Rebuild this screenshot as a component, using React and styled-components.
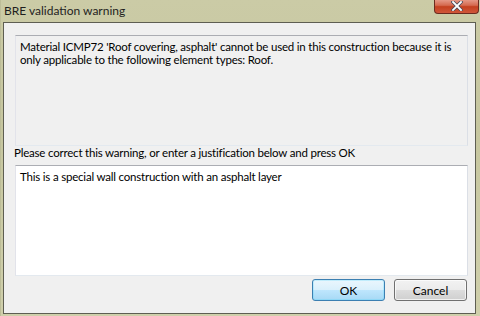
import styled, { createGlobalStyle } from 'styled-components';

const GlobalStyle = createGlobalStyle`
  body {
    margin: 0;
    font-family: Lato, 'Noto Sans', sans-serif;
  }
`;

const Window = styled.div`
  width: 480px;
  height: 316px;
  box-sizing: border-box;
  display: flex;
  flex-direction: column;
  padding: 0 4px 2px 2px;
  background: linear-gradient(180deg, #cbcba6 0%, #c6c69f 40%, #cfcfab 100%);
  border-left: 1px solid #bdbd98;
`;

const TitleBar = styled.div`
  height: 22px;
  display: flex;
  align-items: flex-start;
  justify-content: space-between;
`;

const Title = styled.div`
  font-size: 12px;
  color: #1e1e1e;
  padding: 3px 0 0 1px;
`;

const CloseButton = styled.div`
  width: 45px;
  height: 15px;
  margin-top: -1px;
  margin-right: -3px;
  box-sizing: border-box;
  border: 1px solid #6b2b1f;
  border-top: none;
  border-radius: 0 0 4px 4px;
  background: linear-gradient(180deg, #e8a090 0%, #d56a50 45%, #c4401f 55%, #d0563a 100%);
  display: flex;
  align-items: center;
  justify-content: center;
`;

const Client = styled.div`
  flex: 1;
  display: flex;
  flex-direction: column;
  background: #f0f0f0;
  border: 1px solid #5e5e52;
  padding: 12px 7px 11px 11px;
  font-size: 11.5px;
  letter-spacing: -0.2px;
  color: #000;
`;

const Panel = styled.div`
  height: 111px;
  box-sizing: border-box;
  border: 1px solid #abadb3;
  border-color: #abadb3 #dbdfe6 #e3e9ef #e2e3ea;
  background: ${({ $editable }) => ($editable ? '#fff' : '#f0f0f0')};
  padding: 4px 4px;
  line-height: 13px;
`;

const Label = styled.div`
  height: 19px;
  box-sizing: border-box;
  padding-top: 0;
  line-height: 14px;
  margin-left: -1px;
`;

const ButtonRow = styled.div`
  display: flex;
  justify-content: flex-end;
  gap: 9px;
  margin-top: 3px;
  padding-right: 1px;
`;

const Button = styled.div`
  width: 73px;
  height: 22px;
  box-sizing: border-box;
  border: 1px solid ${({ $primary }) => ($primary ? '#3c7fb1' : '#707070')};
  border-radius: 3px;
  background: ${({ $primary }) =>
    $primary
      ? 'linear-gradient(180deg, #eaf6fd 0%, #d9f0fc 50%, #bee6fd 51%, #a7d9f5 100%)'
      : 'linear-gradient(180deg, #f2f2f2 0%, #ebebeb 50%, #dddddd 51%, #cfcfcf 100%)'};
  box-shadow: inset 0 0 0 1px ${({ $primary }) => ($primary ? '#48d2fc40' : '#ffffffb0')};
  display: flex;
  align-items: center;
  justify-content: center;
  font-size: 12px;
  letter-spacing: 0;
`;

export default function App() {
  return (
    <>
      <GlobalStyle />
      <Window>
        <TitleBar>
          <Title>BRE validation warning</Title>
          <CloseButton>
            <svg width="12" height="10" viewBox="0 0 12 10">
              <path d="M2 1 L10 9 M10 1 L2 9" stroke="#4a4a5a" strokeWidth="3.4" strokeLinecap="square" />
              <path d="M2 1 L10 9 M10 1 L2 9" stroke="#ffffff" strokeWidth="1.8" strokeLinecap="square" />
            </svg>
          </CloseButton>
        </TitleBar>
        <Client>
          <Panel>
            Material ICMP72 'Roof covering, asphalt' cannot be used in this construction because it is
            only applicable to the following element types: Roof.
          </Panel>
          <Label>Please correct this warning, or enter a justification below and press OK</Label>
          <Panel $editable>This is a special wall construction with an asphalt layer</Panel>
          <ButtonRow>
            <Button $primary>OK</Button>
            <Button>Cancel</Button>
          </ButtonRow>
        </Client>
      </Window>
    </>
  );
}
